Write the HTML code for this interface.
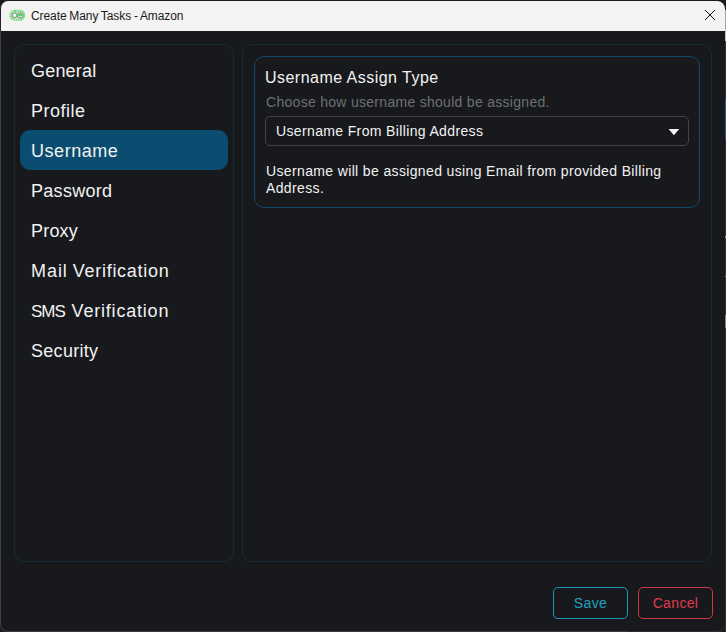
<!DOCTYPE html>
<html><head><meta charset="utf-8">
<style>
html,body{margin:0;padding:0;}
body{width:726px;height:632px;overflow:hidden;background:#1a1b1f;font-family:"Liberation Sans",sans-serif;position:relative;}
#edge{position:absolute;left:725px;top:0;width:1px;height:632px;background:#323337;}
#edge i{position:absolute;left:0;width:1px;display:block;}
#win{position:absolute;left:0;top:1px;width:724px;height:630px;background:#18191d;border-radius:8px;overflow:hidden;border-left:1px solid #3c3d40;border-bottom:1px solid #3a3b3e;box-sizing:content-box;}
#tb{position:absolute;left:0;top:0;width:100%;height:30px;background:#f3f3f3;}
#tb .t{position:absolute;left:30px;top:8px;font-size:12px;color:#1a1a1a;line-height:14px;white-space:nowrap;letter-spacing:-0.08px;word-spacing:-0.5px;}
.panel{position:absolute;border:1px solid #142d39;border-radius:10px;box-sizing:border-box;}
.mi{position:absolute;left:5px;width:208px;height:40px;border-radius:10px;box-sizing:border-box;padding-left:11px;padding-top:1px;font-size:18px;line-height:40px;color:#f2f2f2;white-space:nowrap;}
.mi.sel{background:#0a4d70;}
.card{position:absolute;border:1px solid #0d4a6b;border-radius:10px;box-sizing:border-box;}
.btn{position:absolute;top:586px;width:75px;height:32px;border-radius:5px;box-sizing:border-box;font-size:14px;letter-spacing:0.35px;line-height:30px;text-align:center;}
</style></head><body>
<div id="edge"><i style="top:0;height:10px;background:#1c1d20"></i><i style="top:10px;height:19px;background:#a4a5a6"></i><i style="top:29px;height:12px;background:#c4c5c6"></i><i style="top:100px;height:39px;background:#2b5d7c"></i><i style="top:236px;height:2px;background:#9a9b9d"></i><i style="top:276px;height:1px;background:#7f99ad"></i><i style="top:315px;height:13px;background:#a08262"></i></div>
<div id="win">
<div id="tb"><span class="t">Create Many Tasks - Amazon</span>
<svg style="position:absolute;left:8px;top:8px" width="18" height="13" viewBox="0 0 18 13"><rect x="1.5" y="2" width="13.8" height="8.6" rx="4.3" ry="4.3" fill="none" stroke="#68da6e" stroke-opacity="0.9" stroke-width="2.3" stroke-dasharray="1.8 0.55"/><circle cx="5.7" cy="6.3" r="2.4" fill="#f4f4f4" stroke="#6f8f72" stroke-opacity="0.8" stroke-width="1.3"/><circle cx="11.3" cy="6.3" r="2.7" fill="none" stroke="#6f8f72" stroke-opacity="0.75" stroke-width="1.3"/><ellipse cx="11.2" cy="6" rx="1.9" ry="1.4" fill="#49d552"/><circle cx="8.3" cy="6.2" r="1" fill="#6fc276" fill-opacity="0.85"/></svg>
<svg style="position:absolute;left:703px;top:8px" width="12" height="12" viewBox="0 0 12 12"><path d="M1 1 L11 11 M11 1 L1 11" stroke="#111" stroke-width="1" fill="none"/></svg>
</div>
<div class="panel" style="left:13px;top:43px;width:220px;height:518px;">
<div class="mi" style="top:5px;letter-spacing:0.2px">General</div>
<div class="mi" style="top:45px;letter-spacing:0.5px">Profile</div>
<div class="mi sel" style="top:85px;letter-spacing:0.55px">Username</div>
<div class="mi" style="top:125px;letter-spacing:0.3px">Password</div>
<div class="mi" style="top:165px;letter-spacing:0.2px">Proxy</div>
<div class="mi" style="top:205px"><span style="letter-spacing:0.95px">Mail </span><span style="letter-spacing:0.72px;margin-left:-1px">Verification</span></div>
<div class="mi" style="top:245px"><span style="letter-spacing:-1px;font-size:17px">SMS </span><span style="letter-spacing:0.8px;margin-left:3px">Verification</span></div>
<div class="mi" style="top:285px;letter-spacing:0.3px">Security</div>
</div>
<div class="panel" style="left:241px;top:43px;width:470px;height:518px;">
<div class="card" style="left:11px;top:11px;width:446px;height:152px;">
<div style="position:absolute;left:10px;top:11px;font-size:16px;line-height:20px;color:#f2f2f2;white-space:nowrap;letter-spacing:0.47px;">Username Assign Type</div>
<div style="position:absolute;left:11px;top:37px;font-size:14px;line-height:16px;color:#6d7076;white-space:nowrap;letter-spacing:0.29px;">Choose how username should be assigned.</div>
<div style="position:absolute;left:10px;top:59px;width:424px;height:30px;border:1px solid #424449;border-radius:5px;box-sizing:border-box;">
<div style="position:absolute;left:10px;top:6px;font-size:14px;line-height:16px;color:#f2f2f2;white-space:nowrap;letter-spacing:0.36px;">Username From Billing Address</div>
<svg style="position:absolute;left:402px;top:11px" width="12" height="8" viewBox="0 0 12 8"><path d="M0.6 1 L11.2 1 L5.9 7.2 Z" fill="#f4f4f4"/></svg>
</div>
<div style="position:absolute;left:11px;top:106px;font-size:14px;line-height:17px;color:#f2f2f2;width:425px;letter-spacing:0.36px;">Username will be assigned using Email from provided Billing Address.</div>
</div>
</div>
<div class="btn" style="left:552px;border:1px solid #1e97af;color:#22a3bd;">Save</div>
<div class="btn" style="left:637px;border:1px solid #d03747;color:#e0394a;">Cancel</div>
</div>
<div style="position:absolute;left:0;top:8px;width:1px;height:23px;background:#212225"></div>
<div style="position:absolute;left:627px;top:631px;width:91px;height:1px;background:#2b2c2f"></div>
</body></html>
